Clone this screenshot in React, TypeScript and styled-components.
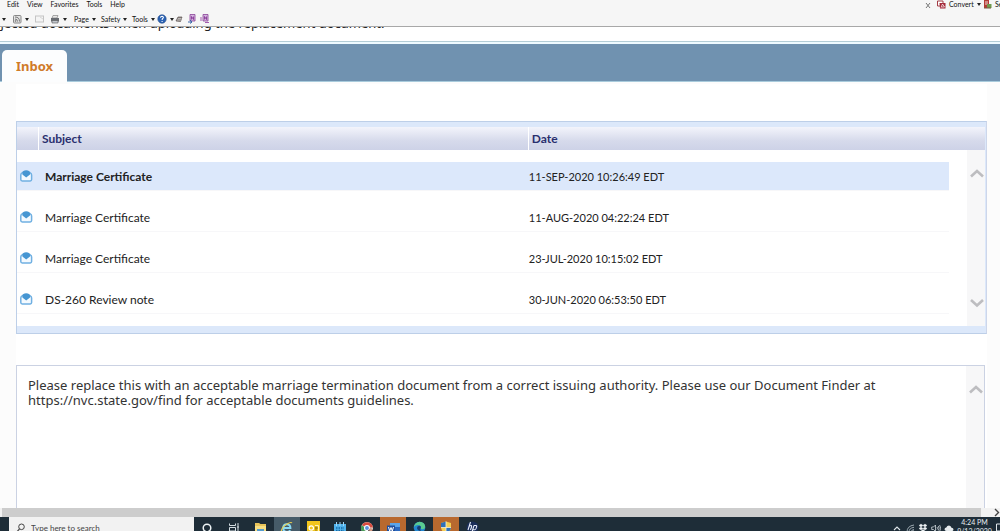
import React from 'react';
import styled, { createGlobalStyle } from 'styled-components';

const GlobalStyle = createGlobalStyle`
  *, *::before, *::after { box-sizing: border-box; }
  html, body, #root { height: 100%; }
  body { margin: 0; overflow: hidden; background: #fcfcfc; }
  button, input { font: inherit; color: inherit; margin: 0; padding: 0; border: 0; background: none; }
`;

const uiFont = 'Lato, "Open Sans", sans-serif';
const tableFont = 'Lato, "Open Sans", sans-serif';
const messageFont = '"Noto Sans", "Open Sans", sans-serif';

const Screen = styled.div`
  display: flex;
  flex-direction: column;
  height: 100%;
  font-family: ${uiFont};
  color: #333;
`;

/* ---------- Browser chrome ---------- */

const Chrome = styled.header`
  display: flex;
  flex: none;
  justify-content: space-between;
  height: 27px;
  overflow: hidden;
  background: #f6f6f6;
  border-bottom: 1px solid #a8a8a8;
  font-size: 7px;
  line-height: 9px;
  color: #111;
`;

const ChromeLeft = styled.div`
  display: flex;
  flex-direction: column;
  gap: 5px;
`;

const MenuBar = styled.nav`
  display: flex;
  gap: 8px;
  padding-left: 7px;
`;

const ToolBar = styled.div`
  display: flex;
  align-items: center;
  height: 10px;
  padding-left: 2px;
`;

const ChromeButton = styled.button<{ $width?: number }>`
  display: flex;
  flex: none;
  align-items: center;
  gap: 3px;
  width: ${({ $width }) => ($width ? `${$width}px` : 'auto')};
  white-space: nowrap;
`;

const Converter = styled.div`
  display: flex;
  align-items: center;
  height: 9px;
  width: 76px;
`;

const Caret = styled.span`
  flex: none;
  width: 0;
  height: 0;
  border: 2px solid transparent;
  border-top: 3px solid #222;
  border-bottom: 0;
`;

/* ---------- Page ---------- */

const Page = styled.main`
  display: flex;
  flex: 1;
  flex-direction: column;
  min-height: 0;
  overflow: hidden;
`;

const Notice = styled.div`
  flex: none;
  height: 15px;
  overflow: hidden;
  background: #fff;
  border-bottom: 1px solid #b3cdd6;
`;

const NoticeText = styled.p`
  margin: -12px 0 0 -12px;
  font: 13px/16px ${messageFont};
  white-space: nowrap;
  color: #222;
`;

const TabStrip = styled.div`
  display: flex;
  flex: none;
  align-items: flex-end;
  height: 40px;
  padding-left: 2px;
  background: #7092b0;
  border-top: 2px solid #eefaff;
  border-bottom: 1px solid #a9cbdc;
`;

const Tab = styled.button`
  height: 32px;
  padding: 0 14px;
  margin-bottom: -1px;
  border-radius: 5px 5px 0 0;
  background: #fcfdfe;
  font: bold 13px/30px "Noto Sans", sans-serif;
  color: #d07b2a;
`;

const Content = styled.div`
  display: flex;
  flex: 1;
  flex-direction: column;
  gap: 31px;
  min-height: 0;
  margin: 0 13px 0 16px;
  padding-top: 39px;
  background: linear-gradient(#fcfcfc 2px, #fff 2px);
`;

const InboxPanel = styled.section`
  display: grid;
  flex: none;
  padding: 5px 1px 7px 0;
  background: #dce8fa;
  border: 1px solid #bdcfe8;
  border-right-color: #cdd6ea;
`;

const MailTable = styled.table`
  grid-area: 1 / 1;
  width: 100%;
  height: 199px;
  table-layout: fixed;
  border-collapse: separate;
  border-spacing: 0;
  background: #fff;
  font: 12px/17px ${tableFont};
  color: #222;
`;

const HeadCell = styled.th<{ $width?: string; $divided?: boolean }>`
  width: ${({ $width }) => $width ?? 'auto'};
  height: 23px;
  padding: 0 3px;
  background: linear-gradient(#f3f4fb, #d6daeb 60%, #cdd2e7);
  border-right: ${({ $divided }) => ($divided ? '1px solid #fff' : '0')};
  text-align: left;
  color: #2a2f6e;
`;

const MailRow = styled.tr<{ $selected?: boolean }>`
  height: 41px;
  font-weight: ${({ $selected }) => ($selected ? 700 : 400)};
  --row-fill: ${({ $selected }) => ($selected ? '#dce8fb' : 'transparent')};
`;

const Cell = styled.td<{ $inset?: number }>`
  padding: 0 0 0 ${({ $inset }) => $inset ?? 0}px;
  border-top: 12px solid transparent;
  border-bottom: 1px solid #f7f7f9;
  background: var(--row-fill) padding-box;
  white-space: nowrap;
`;

const DateCell = styled(Cell)`
  font-size: 11px;
  font-weight: 400;
`;

const BlankCell = styled.td`
  padding: 0;
`;

const IconCell = styled(Cell)`
  svg { display: block; }
`;

const ScrollTrack = styled.div<{ $top?: number }>`
  display: flex;
  grid-area: 1 / 1;
  flex-direction: column;
  flex: none;
  justify-content: space-between;
  justify-self: end;
  width: 18px;
  margin-top: ${({ $top }) => $top ?? 0}px;
  padding: 16px 1px 16px 3px;
  background: #f7f7f8;

  button { display: block; height: 14px; }
  svg { display: block; }
`;

const MessagePanel = styled.section`
  display: flex;
  flex: 1;
  min-height: 140px;
  margin-right: 2px;
  background: #fff;
  border: 1px solid #cbd2e3;
  border-bottom: 0;
`;

const MessageText = styled.p`
  flex: 1;
  margin: 0;
  padding: 12px 56px 0 11px;
  font: 13px/15px ${messageFont};
  color: #333;
`;

const PageScroll = styled.div`
  display: flex;
  flex: none;
  align-items: center;
  justify-content: space-between;
  height: 9px;
  padding-left: 2px;
  background: #f2f2f2;
`;

const PageThumb = styled.div`
  flex: 1;
  height: 9px;
  margin-right: 12px;
  background: #cdcdcd;
`;

/* ---------- Taskbar ---------- */

const Taskbar = styled.footer`
  display: flex;
  flex: none;
  height: 14px;
  overflow: hidden;
  background: #1e2d38;
  color: #e8eef2;
`;

const StartEdge = styled.button`
  flex: none;
  width: 9px;
  height: 21px;
`;

const SearchBox = styled.label`
  display: flex;
  flex: none;
  align-items: center;
  gap: 6px;
  width: 185px;
  height: 21px;
  padding-left: 7px;
  background: #f2f2f2;
  color: #444;

  input { flex: 1; min-width: 0; font: 8px/12px ${uiFont}; outline: 0; }
  input::placeholder { color: #444; opacity: 1; }
`;

const Apps = styled.div`
  display: flex;
  flex: none;
  width: 292px;
`;

const AppButton = styled.button<{ $fill?: string }>`
  display: flex;
  flex: 1;
  align-items: center;
  justify-content: center;
  height: 21px;
  background: ${({ $fill }) => $fill ?? 'transparent'};
`;

const Tray = styled.div`
  display: flex;
  align-items: center;
  gap: 3px;
  height: 21px;
  margin-left: auto;

  svg { flex: none; display: block; }
`;

const Clock = styled.time`
  width: 35px;
  height: 21px;
  padding-top: 1px;
  font: 7px/9px ${uiFont};
  text-align: center;
  white-space: nowrap;
`;

/* ---------- Drawings ---------- */

const MailIcon = () => (
  <svg width="18" height="16" viewBox="0 0 18 16" aria-hidden="true">
    <path d="M3.800 7 Q3.800 5.600 5.500 4.600 H12.900 Q14.600 5.600 14.600 7 V11.600 Q14.600 13 13.200 13 H5.200 Q3.800 13 3.800 11.600 Z" fill="#f4faff" stroke="#70b0e2" strokeWidth="1.500" />
    <path d="M5.400 5 Q5.600 2.200 9.200 2.200 Q12.800 2.200 13 5 V6.600 L9.200 9.400 L5.400 6.600 Z" fill="#4696d2" />
  </svg>
);

const Chevron = ({ down = false }: { down?: boolean }) => (
  <svg width="14" height="14" viewBox="0 0 14 14" aria-hidden="true">
    <path d={down ? 'M1 4 L7 9.500 L13 4' : 'M1 10.500 L7 5 L13 10.500'} fill="none" stroke="#bdbdc0" strokeWidth="2.600" />
  </svg>
);

const FeedIcon = () => (
  <svg width="9" height="9" viewBox="0 0 9 9"><rect x=".5" y=".5" width="7.500" height="7.500" rx="1" fill="#e2e2e2" stroke="#888" /><circle cx="2.500" cy="6" r=".8" fill="#666" /><path d="M2 4 Q4.500 4 4.500 6.500 M2 2 Q6.500 2 6.500 6.500" fill="none" stroke="#777" /></svg>
);
const EnvelopeIcon = () => (
  <svg width="9" height="8" viewBox="0 0 9 8"><rect x=".5" y="1" width="8" height="6" fill="#f4f4f4" stroke="#c4c4c4" /><path d="M5 2 L8 4" stroke="#d5d5d5" /></svg>
);
const PrinterIcon = () => (
  <svg width="10" height="9" viewBox="0 0 10 9"><path d="M3 .5 H8 L7 3 H2 Z" fill="#e8e8e8" stroke="#888" strokeWidth=".7" /><path d="M1 3 H9 V6.500 H1 Z" fill="#686c72" /><path d="M2 5.500 H8 V8 H2 Z" fill="#c2c6cc" stroke="#555" strokeWidth=".6" /></svg>
);
const HelpIcon = () => (
  <svg width="10" height="10" viewBox="0 0 10 10"><circle cx="5" cy="5" r="4.200" fill="#2b63b5" stroke="#234a86" strokeWidth=".6" /><path d="M3.500 3.800 Q3.600 2.300 5 2.300 Q6.600 2.400 6.300 3.900 Q5.100 4.700 5.100 5.900 M5.100 6.900 V8" fill="none" stroke="#fff" strokeWidth="1.100" /></svg>
);
const PenIcon = () => (
  <svg width="8" height="8" viewBox="0 0 8 8"><path d="M1 6 L3 2 H7 L5.500 6.500 Z" fill="#8c8380" stroke="#5e5654" strokeWidth=".7" /><path d="M2 5 H6 M3 3.500 H6.500" stroke="#ddd" strokeWidth=".6" /></svg>
);
const NotebookIcon = ({ linked = false }: { linked?: boolean }) => (
  <svg width="10" height="10" viewBox="0 0 10 10"><path d="M3 .5 H8 V7 H3 Z" fill="#d3b4de" stroke="#8a4398" strokeWidth=".8" /><path d="M4.500 5.500 V2.500 L6.500 5.500 V2.500" fill="none" stroke="#802c90" strokeWidth=".8" />{linked ? <path d="M5 8.500 H9 M1 3 V7" stroke="#a45aae" /> : <path d="M1 8 H5 M3 6 L5 8 L3 9.500" fill="none" stroke="#3a69a9" />}</svg>
);
const PdfIcon = () => (
  <svg width="9" height="9" viewBox="0 0 9 9"><path d="M.5 1 H6 V6 H.5 Z" fill="#fff" stroke="#a33c45" /><path d="M2.500 3 H8.500 V8.500 H3 Z" fill="#a52939" /><path d="M4 7.500 L5.500 4 L7.500 7 H4.500" fill="none" stroke="#fff" strokeWidth=".7" /></svg>
);
const SelectIcon = () => (
  <svg width="9" height="9" viewBox="0 0 9 9"><path d="M1 0 H6 V8 H1 Z" fill="#b43c36" /><path d="M2 2 H5 M2 4 H5" stroke="#fff" strokeWidth=".8" /><rect x="4" y="4" width="4.500" height="4" fill="#6f9a4d" /><path d="M1 8 H8" stroke="#7a5940" /></svg>
);
const SearchIcon = () => (
  <svg width="9" height="10" viewBox="0 0 9 10"><circle cx="5.500" cy="3.800" r="2.800" fill="none" stroke="#444" /><path d="M3.500 6 L.7 9" stroke="#444" strokeWidth="1.100" /></svg>
);

const CortanaIcon = () => <svg width="12" height="12" viewBox="0 0 12 12"><circle cx="6" cy="6" r="3.800" fill="none" stroke="#eef3f5" strokeWidth="1.500" /></svg>;
const TaskViewIcon = () => <svg width="12" height="12" viewBox="0 0 12 12"><path d="M1.500 1.500 V3.500 H7.500 V1.500 M1.500 5.500 H7.500 V9 H1.500 Z M10 1 V11 M9 5 H11" fill="none" stroke="#d3dce1" /></svg>;
const FolderIcon = () => <svg width="13" height="12" viewBox="0 0 13 12"><path d="M1 1 H5 L6.500 2 H12 V12 H1 Z" fill="#e9c45a" /><path d="M1 4 H12 V12 H1 Z" fill="#f8df83" /><path d="M3 7 H10 V12 H3 Z" fill="#559bcc" /></svg>;
const ExplorerIcon = () => <svg width="13" height="13" viewBox="0 0 13 13"><path d="M3.200 7 H10.400 Q10.400 3.200 6.900 3.200 Q3.200 3.200 3.200 7 Q3.200 11 7 11 Q9.300 11 10.200 9.200" fill="none" stroke="#8bdaf5" strokeWidth="2" /><path d="M1 11.500 Q1.500 6 7 3 Q11 .6 12 2" fill="none" stroke="#edd14f" strokeWidth="1.100" /></svg>;
const OutlookIcon = () => <svg width="13" height="13" viewBox="0 0 13 13"><path d="M0 0 H13 V13 H0 Z" fill="#f2c51d" /><path d="M8 4.500 H11.500 V11" fill="none" stroke="#fff3b6" /><circle cx="4.300" cy="7" r="2.200" fill="none" stroke="#fff" strokeWidth="1.200" /><path d="M9 5.500 V10 M8 7 H11" stroke="#8d7410" /></svg>;
const CalendarIcon = () => <svg width="12" height="12" viewBox="0 0 12 12"><path d="M0 2 H12 V12 H0 Z" fill="#4fb2ec" /><path d="M2.500 0 V4 M6 0 V4 M9.500 0 V4" stroke="#9fd8f8" /><path d="M2 6 H10 M2 8.500 H10" stroke="#156ba8" strokeDasharray="1.500 1" strokeWidth="1.300" /></svg>;
const ChromeIcon = () => <svg width="14" height="14" viewBox="0 0 13 13"><circle cx="6.500" cy="6.500" r="5.500" fill="#e9e5df" /><path d="M1.700 4 A5.500 5.500 0 0 1 12 6 H6.500 Z" fill="#d84c40" /><path d="M1.500 4 A5.500 5.500 0 0 0 6 12 L6.500 7 Z" fill="#4a9c59" /><circle cx="6.500" cy="6.500" r="2.300" fill="#5b91e0" stroke="#fff" /><path d="M7 12 Q7 7.500 10 7.500 Q13 8 12.500 13 H7 Z" fill="#33242a" /><circle cx="10" cy="8" r="1.600" fill="#d29a85" /></svg>;
const WordIcon = () => <svg width="13" height="12" viewBox="0 0 13 12"><path d="M3 1 H13 V12 H3 Z" fill="#5aa4e9" /><path d="M3 5 H13 V12 H3 Z" fill="#2b67bd" /><path d="M0 3.500 H8 V11 H0 Z" fill="#1f4f9f" /><path d="M1.500 5 L2.700 9 L4 5.500 L5.300 9 L6.500 5" fill="none" stroke="#fff" /></svg>;
const EdgeIcon = () => <svg width="13" height="13" viewBox="0 0 13 13"><circle cx="6.500" cy="6.500" r="5.800" fill="#2287d0" /><path d="M.8 6 Q2 1 6.700 .8 Q12 1 12.200 6 Q12 8.500 9 8.300 Q7.300 8 8 6.500 Q8 4 5 4 Q2.500 4 .8 6" fill="#5acb91" /><path d="M4 7 Q4 5 6.400 4.700 Q8.200 5 7.800 6.500 Q6.500 8.500 8 9.800 Q4.500 10 4 7" fill="#173e73" /></svg>;
const ShieldIcon = () => <svg width="12" height="13" viewBox="0 0 12 13"><path d="M6 .5 L11 2 V6 Q11 10.500 6 12.500 Q1 10.500 1 6 V2 Z" fill="#f4ce52" /><path d="M6 .5 V6.500 H1 V2 Z M6 6.500 H11 Q10.500 10.500 6 12.500 Z" fill="#2f70b8" /><path d="M6 .5 V12 M1 6.500 H11" stroke="#f6efd4" strokeWidth=".8" /></svg>;
const HpIcon = () => <svg width="13" height="13" viewBox="0 0 13 13"><circle cx="6.500" cy="6.500" r="6" fill="#1b2e59" /><path d="M4.500 1 L2 9 M3.500 5 Q6 3.500 5.500 6 L4.500 9 M8 4.500 L5.500 12.500 M8 4.500 H10 Q11 4.500 10.500 6 Q10 8.800 9 8.800 H7" fill="none" stroke="#e7ecfb" strokeWidth="1.100" /></svg>;

const TrayUp = () => <svg width="10" height="10" viewBox="0 0 10 10"><path d="M2 7 L5 4 L8 7" fill="none" stroke="#dfe6ea" strokeWidth="1.100" /></svg>;
const TrayWifi = () => <svg width="10" height="10" viewBox="0 0 10 10"><path d="M2 9 Q2 3 9 2 M4 9 Q4 5 9 4.300 M6 9 Q6 7 9 6.500" fill="none" stroke="#9ba8b0" /><circle cx="8.300" cy="8.500" r="1" fill="#dfe6ea" /></svg>;
const TrayDropbox = () => <svg width="10" height="10" viewBox="0 0 10 10"><path d="M3 1 L5 2.500 L3 4 L1 2.500 Z M7 1 L9 2.500 L7 4 L5 2.500 Z M3 4 L5 5.500 L3 7 L1 5.500 Z M7 4 L9 5.500 L7 7 L5 5.500 Z M5 6.500 L7 8 L5 9.500 L3 8 Z" fill="#eef3f6" stroke="#eef3f6" strokeWidth=".4" /></svg>;
const TraySpeaker = () => <svg width="10" height="10" viewBox="0 0 10 10"><path d="M.7 4 H2.500 L4.500 2 V8.500 L2.500 6.500 H.7 Z M6 4 Q7 5.200 6 6.500 M7.300 3 Q8.900 5.200 7.300 7.500 M8.600 2 Q10.800 5.200 8.600 8.500" fill="none" stroke="#cfd8dd" strokeWidth=".8" /></svg>;
const TrayCloud = () => <svg width="10" height="10" viewBox="0 0 10 10"><path d="M2.500 8 Q.5 8 .5 6.200 Q.7 4.700 2.300 4.500 Q3 2.500 5 2.500 Q7 2.700 7.500 4.700 Q9.500 4.800 9.500 6.500 Q9.300 8 8 8 Z" fill="#e6ecef" /></svg>;

const menus = ['Edit', 'View', 'Favorites', 'Tools', 'Help'];

const mails = [
  { subject: 'Marriage Certificate', date: '11-SEP-2020 10:26:49 EDT', selected: true },
  { subject: 'Marriage Certificate', date: '11-AUG-2020 04:22:24 EDT' },
  { subject: 'Marriage Certificate', date: '23-JUL-2020 10:15:02 EDT' },
  { subject: 'DS-260 Review note', date: '30-JUN-2020 06:53:50 EDT' },
];

const apps: { name: string; icon: React.ReactNode; fill?: string }[] = [
  { name: 'Cortana', icon: <CortanaIcon /> },
  { name: 'Task view', icon: <TaskViewIcon /> },
  { name: 'File Explorer', icon: <FolderIcon /> },
  { name: 'Internet Explorer', icon: <ExplorerIcon />, fill: '#465b68' },
  { name: 'Outlook', icon: <OutlookIcon /> },
  { name: 'Calendar', icon: <CalendarIcon /> },
  { name: 'Chrome', icon: <ChromeIcon /> },
  { name: 'Word', icon: <WordIcon />, fill: '#b8692f' },
  { name: 'Edge', icon: <EdgeIcon /> },
  { name: 'Security', icon: <ShieldIcon />, fill: '#b8692f' },
  { name: 'HP', icon: <HpIcon /> },
];

export default function App() {
  return (
    <Screen>
      <GlobalStyle />
      <Chrome>
        <ChromeLeft>
          <MenuBar>
            {menus.map((name) => <ChromeButton key={name}>{name}</ChromeButton>)}
          </MenuBar>
          <ToolBar>
            <ChromeButton $width={11} aria-label="Home"><Caret /></ChromeButton>
            <ChromeButton $width={22} aria-label="Feeds"><FeedIcon /><Caret /></ChromeButton>
            <ChromeButton $width={15} aria-label="Mail"><EnvelopeIcon /></ChromeButton>
            <ChromeButton $width={24} aria-label="Print"><PrinterIcon /><Caret /></ChromeButton>
            <ChromeButton $width={27}>Page<Caret /></ChromeButton>
            <ChromeButton $width={31}>Safety<Caret /></ChromeButton>
            <ChromeButton $width={25}>Tools<Caret /></ChromeButton>
            <ChromeButton $width={18} aria-label="Help"><HelpIcon /><Caret /></ChromeButton>
            <ChromeButton $width={12} aria-label="Ink"><PenIcon /></ChromeButton>
            <ChromeButton $width={13} aria-label="Send to notebook"><NotebookIcon /></ChromeButton>
            <ChromeButton $width={10} aria-label="Linked notes"><NotebookIcon linked /></ChromeButton>
          </ToolBar>
        </ChromeLeft>
        <Converter>
          <ChromeButton $width={13} aria-label="Close">
            <svg width="8" height="8" viewBox="0 0 8 8"><path d="M2 2 L6 7 M6 2 L2 7" stroke="#777" /></svg>
          </ChromeButton>
          <ChromeButton $width={46}><PdfIcon />Convert<Caret /></ChromeButton>
          <ChromeButton><SelectIcon />Select</ChromeButton>
        </Converter>
      </Chrome>

      <Page>
        <Notice>
          <NoticeText>rejected documents when uploading the replacement document.</NoticeText>
        </Notice>
        <TabStrip>
          <Tab>Inbox</Tab>
        </TabStrip>
        <Content>
          <InboxPanel>
            <MailTable>
              <thead>
                <tr>
                  <HeadCell $width="22px" $divided aria-label="Status" />
                  <HeadCell $width="50.6%" $divided>Subject</HeadCell>
                  <HeadCell>Date</HeadCell>
                  <HeadCell $width="36px" aria-hidden="true" />
                </tr>
              </thead>
              <tbody>
                {mails.map((mail) => (
                  <MailRow key={mail.date} $selected={mail.selected}>
                    <IconCell><MailIcon /></IconCell>
                    <Cell $inset={6}>{mail.subject}</Cell>
                    <DateCell>{mail.date}</DateCell>
                    <BlankCell />
                  </MailRow>
                ))}
                <tr><BlankCell colSpan={4} /></tr>
              </tbody>
            </MailTable>
            <ScrollTrack $top={23}>
              <button aria-label="Scroll up"><Chevron /></button>
              <button aria-label="Scroll down"><Chevron down /></button>
            </ScrollTrack>
          </InboxPanel>
          <MessagePanel>
            <MessageText>
              Please replace this with an acceptable marriage termination document from a correct issuing authority. Please use our Document Finder at https://nvc.state.gov/find for acceptable documents guidelines.
            </MessageText>
            <ScrollTrack>
              <button aria-label="Scroll message up"><Chevron /></button>
            </ScrollTrack>
          </MessagePanel>
        </Content>
      </Page>

      <PageScroll>
        <PageThumb />
        <svg width="7" height="9" viewBox="0 0 7 9"><path d="M2 1 L5.500 4.500 L2 8" fill="none" stroke="#444" strokeWidth="1.400" /></svg>
      </PageScroll>

      <Taskbar>
        <StartEdge aria-label="Start" />
        <SearchBox>
          <SearchIcon />
          <input type="text" placeholder="Type here to search" aria-label="Search" />
        </SearchBox>
        <Apps>
          {apps.map((app) => <AppButton key={app.name} $fill={app.fill} aria-label={app.name}>{app.icon}</AppButton>)}
        </Apps>
        <Tray>
          <TrayUp /><TrayWifi /><TrayDropbox /><TraySpeaker /><TrayCloud />
          <Clock>4:24 PM<br />9/13/2020</Clock>
          <svg width="5" height="10" viewBox="0 0 5 10"><path d="M5 1 H1.500 V8 H5" fill="none" stroke="#dfe6ea" /></svg>
        </Tray>
      </Taskbar>
    </Screen>
  );
}
